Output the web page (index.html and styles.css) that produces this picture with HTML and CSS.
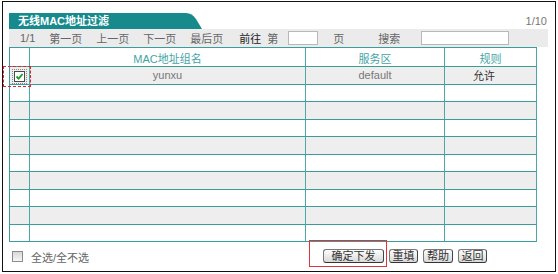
FILE: index.html
```html
<!DOCTYPE html>
<html lang="zh-CN">
<head>
  <meta charset="UTF-8">
  <title>无线MAC地址过滤</title>
  <link rel="stylesheet" href="styles.css">
</head>
<body>
  <div class="frame">
    <!-- 标题栏 -->
    <div class="titlebar">
      <div class="tab">无线MAC地址过滤</div>
      <span class="count">1/10</span>
    </div>

    <!-- 翻页工具条 -->
    <div class="toolbar">
      <span>1/1</span>
      <a>第一页</a>
      <a>上一页</a>
      <a>下一页</a>
      <a>最后页</a>
      <span class="goto">前往</span>
      <span class="di">第</span>
      <input class="page-input" type="text">
      <span class="ye">页</span>
      <span class="search-label">搜索</span>
      <input class="search-input" type="text">
    </div>

    <!-- 列表 -->
    <table class="list">
      <colgroup>
        <col class="c-sel">
        <col class="c-name">
        <col class="c-zone">
        <col class="c-rule">
      </colgroup>
      <tr class="head">
        <th></th><th>MAC地址组名</th><th>服务区</th><th>规则</th>
      </tr>
      <tr class="odd">
        <td class="sel"><span class="cb checked"><svg width="9" height="9" viewBox="0 0 9 9"><path d="M1.5 4.5 L3.6 6.6 L7.6 2" fill="none" stroke="#1f9a2a" stroke-width="1.8"/></svg></span></td>
        <td>yunxu</td><td>default</td><td class="rule">允许</td>
      </tr>
      <tr><td></td><td></td><td></td><td></td></tr>
      <tr class="odd"><td></td><td></td><td></td><td></td></tr>
      <tr><td></td><td></td><td></td><td></td></tr>
      <tr class="odd"><td></td><td></td><td></td><td></td></tr>
      <tr><td></td><td></td><td></td><td></td></tr>
      <tr class="odd"><td></td><td></td><td></td><td></td></tr>
      <tr><td></td><td></td><td></td><td></td></tr>
      <tr class="odd"><td></td><td></td><td></td><td></td></tr>
      <tr><td></td><td></td><td></td><td></td></tr>
    </table>

    <!-- 底部操作 -->
    <div class="footer">
      <div class="select-all">
        <span class="cb"></span>
        <span>全选/全不选</span>
      </div>
      <div class="buttons">
        <button class="btn btn-submit">确定下发</button>
        <button class="btn">重填</button>
        <button class="btn btn-help">帮助</button>
        <button class="btn">返回</button>
      </div>
    </div>
  </div>
</body>
</html>
```

FILE: styles.css
```css
body {
  margin: 0;
  background-color: #fff;
  font-family: "Liberation Sans", "Noto Sans CJK SC", sans-serif;
  font-size: 11px;
  color: #666;
}
.frame {
  margin: 1px 0 0 2px;
  width: 539px;
  height: 258px;
  border: 1px solid #111;
  padding: 11px 7px 0 6px;
}
.titlebar {
  display: flex;
  justify-content: space-between;
  align-items: center;
  height: 16px;
}
.tab {
  width: 193px;
  height: 16px;
  line-height: 16px;
  padding-left: 9px;
  box-sizing: border-box;
  background-color: #168a8d;
  color: #fff;
  font-weight: bold;
  clip-path: path('M0 0 H177 Q183 0 187 6 L193 16 H0 Z');
}
.count {
  padding-right: 1px;
  color: #777;
}
.toolbar {
  display: flex;
  align-items: center;
  gap: 14px;
  height: 18px;
  padding-left: 11px;
  background-color: #ebebeb;
  white-space: nowrap;
}
.toolbar a {
  color: #666;
}
.toolbar .goto {
  margin-left: 2px;
  color: #222;
}
.toolbar .di {
  margin-left: -8px;
}
.toolbar input {
  height: 14px;
  box-sizing: border-box;
  border: 1px solid #b8b8b8;
  background-color: #fff;
  padding: 0;
  margin: 0;
}
.toolbar .page-input {
  width: 30px;
  margin-left: -4px;
}
.toolbar .ye {
  margin-left: 1px;
}
.toolbar .search-label {
  margin-left: 20px;
}
.toolbar .search-input {
  width: 88px;
  margin-left: 7px;
}
.list {
  width: 528px;
  table-layout: fixed;
  border-collapse: separate;
  border-spacing: 0;
  border-top: 1px solid #3a9c9c;
  border-left: 1px solid #3a9c9c;
}
.c-sel { width: 20px; }
.c-name { width: 276px; }
.c-zone { width: 139px; }
.c-rule { width: 92px; }
.list th, .list td {
  padding: 0;
  border-right: 1px solid #49a8a8;
  border-bottom: 1px solid #3a9c9c;
  text-align: center;
  font-weight: normal;
}
.list tr {
  height: 17.56px;
}
.list tr.head {
  height: 19px;
}
.list th {
  padding-top: 2px;
  color: #45a3a6;
}
.list tr.odd td {
  background-color: #eeeeef;
}
.list td {
  color: #777;
}
.list td.sel {
  position: relative;
}
.list td.sel::after {
  content: "";
  position: absolute;
  left: -7px;
  top: -1px;
  right: -2px;
  bottom: -3px;
  border: 1px dashed #e0242c;
}
.list td.rule {
  text-align: left;
  padding-left: 28px;
  vertical-align: top;
  color: #333;
}
.cb {
  display: inline-flex;
  align-items: center;
  justify-content: center;
  width: 11px;
  height: 11px;
  box-sizing: border-box;
  border: 1px solid #8c8c8c;
  background: linear-gradient(#d8d8d8, #f6f6f6);
  vertical-align: middle;
}
.cb.checked {
  border-color: #4a4a4a;
  background: #fff;
  outline: 1px dotted #888;
  outline-offset: 1px;
}
.footer {
  display: grid;
  grid-template-columns: 314px auto;
  align-items: center;
  height: 27px;
}
.select-all {
  display: flex;
  align-items: center;
  gap: 8px;
  padding-left: 3px;
  padding-top: 2px;
}
.buttons {
  display: flex;
  gap: 5px;
}
.btn {
  height: 14px;
  width: 29px;
  padding: 0;
  box-sizing: border-box;
  border: 1px solid #555;
  border-color: #777 #444 #333 #777;
  border-radius: 3px;
  background: linear-gradient(#fdfdfd, #d9d9d9);
  font-family: "Liberation Sans", "Noto Sans CJK SC", sans-serif;
  font-size: 11px;
  line-height: 12px;
  color: #333;
}
.btn-help {
  width: 30px;
}
.btn-submit {
  position: relative;
  width: 61px;
}
.btn-submit::before {
  content: "";
  position: absolute;
  left: -15px;
  top: -10px;
  right: -4px;
  bottom: -5px;
  border: 1px solid #e0343a;
}
```
